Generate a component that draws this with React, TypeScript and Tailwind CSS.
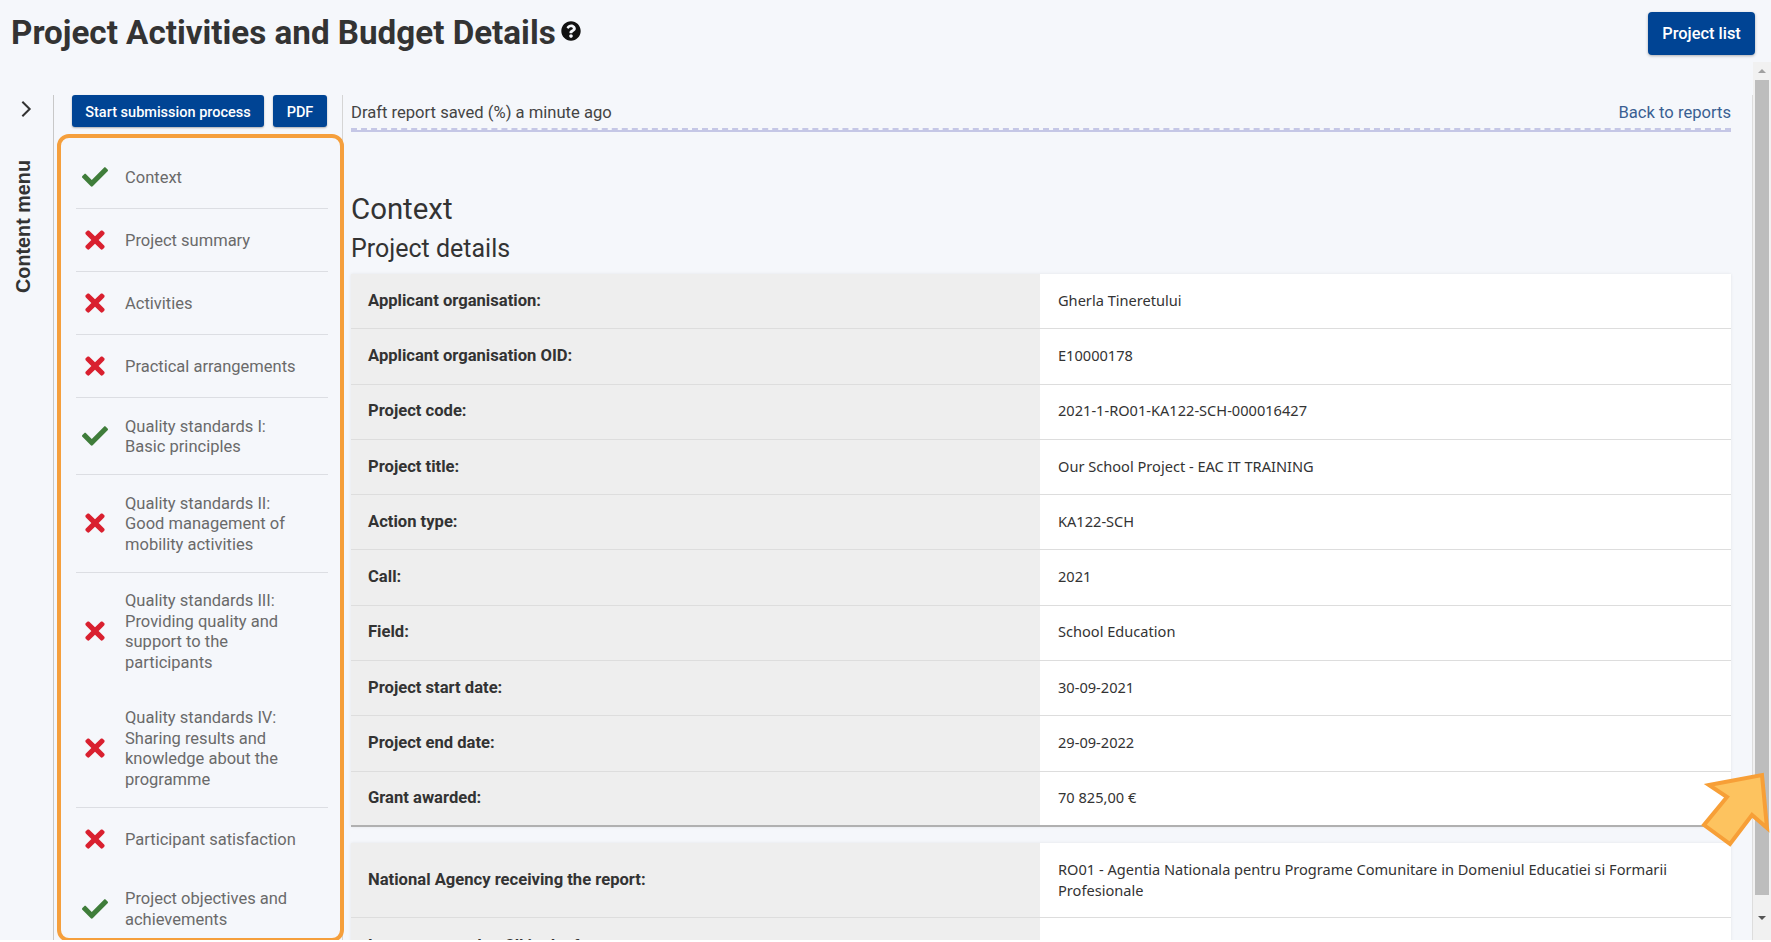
import React from "react";

const rows: [string, string][] = [
  ["Applicant organisation:", "Gherla Tineretului"],
  ["Applicant organisation OID:", "E10000178"],
  ["Project code:", "2021-1-RO01-KA122-SCH-000016427"],
  ["Project title:", "Our School Project - EAC IT TRAINING"],
  ["Action type:", "KA122-SCH"],
  ["Call:", "2021"],
  ["Field:", "School Education"],
  ["Project start date:", "30-09-2021"],
  ["Project end date:", "29-09-2022"],
  ["Grant awarded:", "70 825,00 €"],
];

const items: { ok: boolean; text: string; line?: boolean }[] = [
  { ok: true, text: "Context", line: true },
  { ok: false, text: "Project summary", line: true },
  { ok: false, text: "Activities", line: true },
  { ok: false, text: "Practical arrangements", line: true },
  { ok: true, text: "Quality standards I: Basic principles", line: true },
  { ok: false, text: "Quality standards II: Good management of mobility activities", line: true },
  { ok: false, text: "Quality standards III: Providing quality and support to the participants" },
  { ok: false, text: "Quality standards IV: Sharing results and knowledge about the programme", line: true },
  { ok: false, text: "Participant satisfaction" },
  { ok: true, text: "Project objectives and achievements" },
];

function Check() {
  return (
    <svg viewBox="0 0 512 512" className="w-[26px] h-[26px] text-[#3f7d3a]" fill="currentColor">
      <path d="M173.898 439.404l-166.4-166.4c-9.997-9.997-9.997-26.206 0-36.204l36.203-36.204c9.997-9.998 26.207-9.998 36.204 0L192 312.69 432.095 72.596c9.997-9.997 26.207-9.997 36.204 0l36.203 36.204c9.997 9.997 9.997 26.206 0 36.204l-294.4 294.401c-9.998 9.997-26.207 9.997-36.204-.001z" />
    </svg>
  );
}

function Cross() {
  return (
    <svg viewBox="0 0 352 512" className="w-[20px] h-[28px] text-[#d9202f]" fill="currentColor">
      <path d="M242.72 256l100.07-100.07c12.28-12.28 12.28-32.19 0-44.48l-22.24-22.24c-12.28-12.28-32.19-12.28-44.48 0L176 189.28 75.93 89.21c-12.28-12.28-32.19-12.28-44.48 0L9.21 111.45c-12.28 12.28-12.28 32.19 0 44.48L109.28 256 9.21 356.07c-12.28 12.28-12.28 32.19 0 44.48l22.24 22.24c12.28 12.28 32.2 12.28 44.48 0L176 322.72l100.07 100.07c12.28 12.28 32.2 12.28 44.48 0l22.24-22.24c12.28-12.28 12.28-32.19 0-44.48L242.72 256z" />
    </svg>
  );
}

function Row({ label, value, last }: { label: string; value: string; last?: boolean }) {
  return (
    <div className={`flex h-[55.3px] ${last ? "border-b-2 border-[#b0b0b0]" : "border-b border-[#dddddd]"}`}>
      <div className="w-[689px] shrink-0 bg-[#eeeeee] flex items-center pl-[17px] text-[16.6px] font-bold text-[#333333]">
        {label}
      </div>
      <div className="flex-1 bg-white flex items-center pl-[18px] pb-[1px] text-[14.6px] text-[#333333] font-['Noto_Sans',sans-serif]">
        {value}
      </div>
    </div>
  );
}

export default function App() {
  return (
    <div className="h-[942px] bg-white overflow-hidden">
      <div className="relative h-[940px] overflow-hidden bg-[#f5f7fb] text-[#333333] flex flex-col font-['Roboto',sans-serif]">
        <header className="h-[62px] shrink-0 flex justify-between items-start pl-[11px] pr-[16px] pt-[12px]">
          <div className="flex items-center h-[42px]">
            <h1 className="text-[33.2px] leading-[40px] font-bold text-[#333333]">Project Activities and Budget Details</h1>
            <svg viewBox="0 0 512 512" className="ml-[5px] mb-[5px] w-[20px] h-[20px] text-[#111111]" fill="currentColor">
              <path d="M504 256c0 136.997-111.043 248-248 248S8 392.997 8 256C8 119.083 119.043 8 256 8s248 111.083 248 248zM262.655 90c-54.497 0-89.255 22.957-116.549 63.758-3.536 5.286-2.353 12.415 2.715 16.258l34.699 26.31c5.205 3.947 12.621 3.008 16.665-2.122 17.864-22.658 30.113-35.797 57.303-35.797 20.429 0 45.698 13.148 45.698 32.958 0 14.976-12.363 22.667-32.534 33.976C247.128 238.528 216 254.941 216 296v4c0 6.627 5.373 12 12 12h56c6.627 0 12-5.373 12-12v-1.333c0-28.462 83.186-29.647 83.186-106.667 0-58.002-60.165-102-116.531-102zM256 338c-25.365 0-46 20.635-46 46 0 25.364 20.635 46 46 46s46-20.636 46-46c0-25.365-20.635-46-46-46z" />
            </svg>
          </div>
          <button className="w-[107px] h-[43px] pt-[1px] rounded-[4px] bg-[#004494] text-white text-[16.4px] font-medium shadow-[0_1px_3px_rgba(0,0,0,0.3)]">
            Project list
          </button>
        </header>

        <div className="flex-1 flex min-h-0">
          <aside className="w-[54px] shrink-0 pt-[33px] flex flex-col">
            <div className="flex-1 border-r border-[#c8c8c8] flex flex-col items-center pr-[2px]">
              <svg viewBox="0 0 24 24" className="mt-[3px] w-[22px] h-[22px] text-[#333333]" fill="none" stroke="currentColor" strokeWidth="2.2">
                <path d="M8 4l8 8-8 8" />
              </svg>
              <div className="mt-[40px] mr-[5px] [writing-mode:vertical-rl] rotate-180 text-[19.8px] leading-[22px] font-bold text-[#333333] font-['Liberation_Sans',sans-serif]">
                Content menu
              </div>
            </div>
          </aside>

          <nav className="w-[289px] shrink-0 mt-[33px] pl-[18px] border-r border-[#d5d5d5] flex flex-col">
            <div className="flex gap-[9px] h-[32px]">
              <button className="w-[192px] h-[32px] pt-[3px] rounded-[3px] bg-[#004494] text-white text-[14.5px] font-medium shadow-[0_1px_2px_rgba(0,0,0,0.3)]">
                Start submission process
              </button>
              <button className="w-[54px] h-[32px] pt-[3px] rounded-[3px] bg-[#004494] text-white text-[14.5px] font-medium shadow-[0_1px_2px_rgba(0,0,0,0.3)]">
                PDF
              </button>
            </div>
            <ul className="ml-[4px] w-[252px] mt-[19px]">
              {items.map((it) => (
                <li
                  key={it.text}
                  className={`flex items-center min-h-[63px] py-[16.5px] ${it.line ? "border-b border-[#dcdee3]" : ""}`}
                >
                  <span className="w-[37px] mr-[12px] shrink-0 flex justify-center">{it.ok ? <Check /> : <Cross />}</span>
                  <span className="w-[180px] pt-[2px] text-[16.5px] leading-[20.5px] text-[#6a6a6a]">{it.text}</span>
                </li>
              ))}
            </ul>
          </nav>

          <main className="flex-1 min-w-0 pl-[8px] pr-[21px] pt-[33px]">
            <div className="flex justify-between items-center h-[33px] pt-[3px] text-[16.6px]">
              <span className="text-[#444444]">Draft report saved (%) a minute ago</span>
              <a className="text-[#3a5f92]">Back to reports</a>
            </div>
            <div className="border-t-2 border-dashed border-[#c5c7e6]">
              <div className="h-[2px] bg-[#c5c7e6]" />
            </div>
            <h2 className="mt-[60px] text-[29.4px] leading-[34px] font-normal text-[#333333]">Context</h2>
            <h3 className="mt-[8px] text-[25px] leading-[30px] font-normal text-[#333333]">Project details</h3>
            <section className="mt-[10px] shadow-[0_0_3px_rgba(0,0,0,0.08)]">
              {rows.map(([l, v], i) => (
                <Row key={l} label={l} value={v} last={i === rows.length - 1} />
              ))}
            </section>
            <section className="mt-[16px] shadow-[0_0_3px_rgba(0,0,0,0.08)]">
              <div className="flex h-[75px] border-b border-[#dddddd]">
                <div className="w-[689px] shrink-0 bg-[#eeeeee] flex items-center pl-[17px] text-[16.6px] font-bold text-[#333333]">
                  National Agency receiving the report:
                </div>
                <div className="flex-1 bg-white flex items-center pl-[18px] pr-[40px] pt-[1px] text-[14.6px] leading-[21px] text-[#333333] font-['Noto_Sans',sans-serif]">
                  RO01 - Agentia Nationala pentru Programe Comunitare in Domeniul Educatiei si Formarii Profesionale
                </div>
              </div>
              <div className="flex h-[57px]">
                <div className="w-[689px] shrink-0 bg-[#eeeeee] flex items-center pl-[17px] text-[16.6px] font-bold text-[#333333]">
                  Language used to fill in the form:
                </div>
                <div className="flex-1 bg-white" />
              </div>
            </section>
          </main>

          <div className="w-px mt-[33px] bg-[#dddddd] shrink-0" />
          <div className="w-[18px] shrink-0 bg-[#f1f1f1] flex flex-col items-center">
            <div className="h-[18px] flex items-center justify-center">
              <div className="w-0 h-0 border-x-[4px] border-x-transparent border-b-[4px] border-b-[#a0a0a0]" />
            </div>
            <div className="w-[14px] h-[815px] bg-[#bdbdbd]" />
            <div className="flex-1 flex items-center justify-center">
              <div className="w-0 h-0 border-x-[4px] border-x-transparent border-t-[4px] border-t-[#555555]" />
            </div>
          </div>
        </div>

        {/* annotation overlays */}
        <div className="absolute left-[57px] top-[134px] w-[287px] h-[808px] rounded-[12px] border-[4px] border-[#f59f3c]" />
        <svg className="absolute left-[1700px] top-[770px] w-[71px] h-[80px]" viewBox="1700 770 71 80">
          <path
            d="M1709 785L1762 775L1767 828L1752 815L1730 844L1704 825L1727 797Z"
            fill="#fdc35f"
            stroke="#f79f37"
            strokeWidth="4"
            strokeLinejoin="miter"
          />
        </svg>
      </div>
    </div>
  );
}
